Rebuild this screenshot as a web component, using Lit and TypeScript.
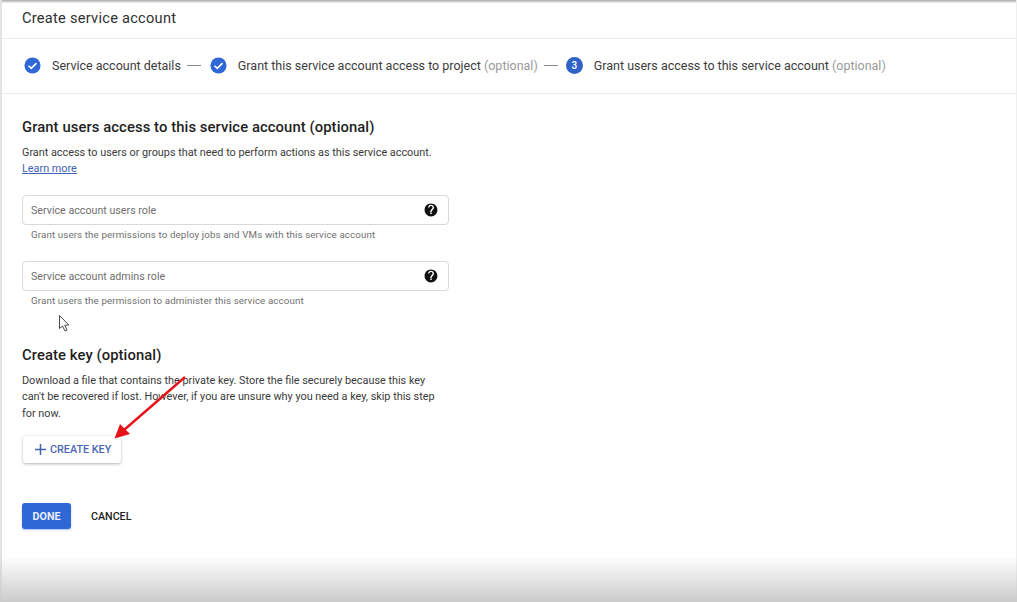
import { LitElement, html, css, svg } from "lit";
import { customElement } from "lit/decorators.js";

const check = html`<svg class="stepicon" viewBox="0 0 18 18"><circle cx="9" cy="9" r="8.5" fill="#2f67d6"/><path d="M4.8 9.3l2.9 2.8 5.5-5.6" fill="none" stroke="#fff" stroke-width="1.7"/></svg>`;
const help = svg`<svg class="help" viewBox="0 0 24 24"><path fill="#111" d="M12 1C5.9 1 1 5.9 1 12s4.9 11 11 11 11-4.9 11-11S18.100 1 12 1zm1.300 18h-2.600v-2.600h2.600V19zm2.700-8.300l-1.100 1.200c-.9.900-1.600 1.700-1.600 3.400h-2.600v-.6c0-1.400.6-2.700 1.600-3.600l1.600-1.600c.5-.5.800-1.100.8-1.800 0-1.400-1.200-2.600-2.700-2.600S9.300 6.300 9.300 7.700H6.900C6.900 4.900 9.200 2.900 12 2.900s5.100 2 5.100 4.800c0 1.200-.5 2.200-1.100 3z"/></svg>`;

@customElement("app-root")
export class AppRoot extends LitElement {
  static styles = css`
    :host { display: block; position: relative; width: 1017px; height: 602px; overflow: hidden; background: #fff;
      font-family: Roboto, "Liberation Sans", sans-serif; color: #262626; }
    .title { height: 38px; padding: 0 22px 2px; box-sizing: border-box; display: flex; align-items: center;
      font-size: 14.6px; letter-spacing: .018em; color: #303030; }
    .stepper { border-top: 1px solid #ececec; border-bottom: 1px solid #ececec; box-sizing: border-box; height: 56px; display: flex; align-items: center; padding: 0 22px 1px 24px; font-size: 12.5px; color: #3c3c3c; }
    .stepicon { width: 17px; height: 17px; flex: none; margin-right: 11px; }
    .num { width: 17px; height: 17px; flex: none; margin-right: 11px; border-radius: 50%; background: #2f62c4; color: #fff; font-size: 10px; font-weight: 500; display: flex; align-items: center; justify-content: center; }
    .dash { width: 14px; height: 1px; background: #8a8a8a; margin: 0 9px 0 6px; flex: none; }
    .dash.b { margin: 0 8px 0 6px; }
    .opt { color: #9a9a9a; }
    main { padding: 0 22px; width: 427px; box-sizing: content-box; }
    h2 { margin: 0; font-size: 14.8px; line-height: 20px; font-weight: 500; color: #1f1f1f; letter-spacing: .006em; }
    .h1 { padding-top: 23px; }
    p { margin: 0; font-size: 10.85px; line-height: 16.3px; color: #3a3a3a; }
    .p1 { margin-top: 8px; }
    a { color: #3f62b5; text-decoration: underline; }
    .field { height: 28px; margin-top: 17px; border: 1px solid #d9d9d9; border-radius: 4px; display: flex; align-items: center; justify-content: space-between; padding: 0 10px 0 8px; font-size: 10.7px; color: #6f6f6f; }
    .field span { padding-top: 1px; }
    .help { width: 14px; height: 14px; }
    .hint { font-size: 9.75px; line-height: 12px; margin: 4px 0 0 9px; color: #6f6f6f; letter-spacing: .012em; }
    .field.two { margin-top: 20px; }
    .h2 { margin-top: 38px; }
    .p2 { margin-top: 8px; width: 425px; line-height: 16.6px; }
    .create { margin-top: 14px; margin-left: 1px; width: 98px; height: 27px; border-radius: 3px; box-shadow: 0 1px 3px rgba(60,64,67,.4); display: flex; align-items: center; gap: 3px; padding-left: 11px; box-sizing: border-box; font-size: 10.8px; font-weight: 500; color: #4a67b4; }
    .plus { width: 13px; height: 13px; }
    .actions { margin-top: 40px; display: flex; align-items: center; gap: 20px; font-size: 10.7px; font-weight: 500; }
    .done { width: 49px; height: 26px; background: #2f67d6; color: #e8eefb; border-radius: 3px; display: flex; align-items: center; justify-content: center; font-weight: 700; box-shadow: 0 1px 2px rgba(47,103,214,.4); }
    .cancel { color: #222; }
    .top { position: absolute; left: 0; right: 0; top: 0; height: 3px; background: linear-gradient(#aaa, #f2f2f2); }
    .left { position: absolute; left: 0; top: 0; bottom: 0; width: 2px; background: #e3e3e3; }
    .right { position: absolute; right: 0; top: 0; bottom: 0; width: 1px; background: #efefef; }
    .bottom { position: absolute; left: 0; right: 0; bottom: 0; height: 46px; background: linear-gradient(rgba(204,204,204,0), #cbcbcb); }
    .overlay { position: absolute; left: 0; top: 0; pointer-events: none; }
  `;

  render() {
    return html`
      <div class="title">Create service account</div>
      <div class="stepper">
        ${check}<span>Service account details</span><span class="dash"></span>
        ${check}<span>Grant this service account access to project <span class="opt">(optional)</span></span><span class="dash b"></span>
        <span class="num">3</span><span>Grant users access to this service account <span class="opt">(optional)</span></span>
      </div>
      <main>
        <h2 class="h1">Grant users access to this service account (optional)</h2>
        <p class="p1">Grant access to users or groups that need to perform actions as this service account.<br /><a>Learn more</a></p>
        <div class="field"><span>Service account users role</span>${help}</div>
        <div class="hint">Grant users the permissions to deploy jobs and VMs with this service account</div>
        <div class="field two"><span>Service account admins role</span>${help}</div>
        <div class="hint">Grant users the permission to administer this service account</div>
        <h2 class="h2">Create key (optional)</h2>
        <p class="p2">Download a file that contains the private key. Store the file securely because this key can't be recovered if lost. However, if you are unsure why you need a key, skip this step for now.</p>
        <div class="create"><svg class="plus" viewBox="0 0 13 13"><path d="M6.500 1v11M1 6.500h11" stroke="#3f62b5" stroke-width="1.500" fill="none"/></svg><span>CREATE KEY</span></div>
        <div class="actions"><div class="done">DONE</div><div class="cancel">CANCEL</div></div>
      </main>
      <div class="top"></div><div class="left"></div><div class="right"></div><div class="bottom"></div>
      <svg class="overlay" width="1017" height="602" viewBox="0 0 1017 602">
        <path d="M185 377L124 430" stroke="#e6131a" stroke-width="2.400" fill="none"/>
        <path d="M114.500 438.500L120 424L130 434Z" fill="#e6131a"/>
        <path d="M59.500 315.500V328.500L62.500 326L65 331L67 330L64.800 325.300L68.800 325Z" fill="#fff" stroke="#333" stroke-width=".9"/>
      </svg>
    `;
  }
}
